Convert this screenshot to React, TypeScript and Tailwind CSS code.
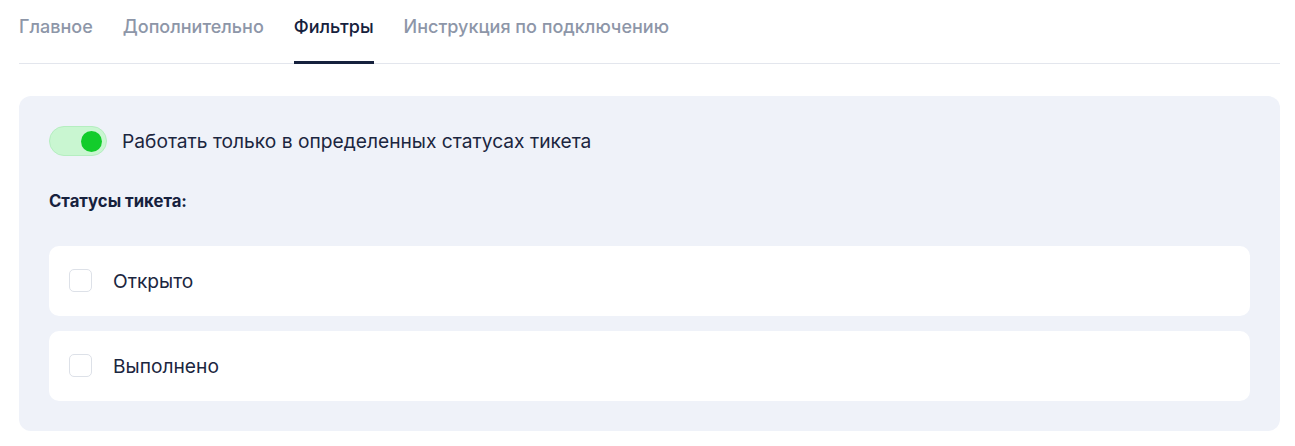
import React, { useState } from 'react';

const tabs = ['Главное', 'Дополнительно', 'Фильтры', 'Инструкция по подключению'];

const statuses = [
  { id: 'open', label: 'Открыто' },
  { id: 'done', label: 'Выполнено' },
];

const App: React.FC = () => {
  const [activeTab, setActiveTab] = useState(2);
  const [enabled, setEnabled] = useState(true);
  const [checked, setChecked] = useState<Record<string, boolean>>({});

  return (
    <div className="min-h-screen bg-white px-[19px] pr-[15px] font-['Inter',sans-serif]">
      {/* Tabs */}
      <div className="flex gap-[30px] border-b border-[#e3e6ed]">
        {tabs.map((tab, i) => (
          <button
            key={tab}
            onClick={() => setActiveTab(i)}
            className={`relative h-[63px] pb-[10px] text-[18px] font-medium leading-none ${
              activeTab === i ? 'text-[#16213d]' : 'text-[#8d96a8]'
            }`}
          >
            {tab}
            {activeTab === i && (
              <span className="absolute bottom-[-1px] left-0 right-0 h-[3px] bg-[#16213d]" />
            )}
          </button>
        ))}
      </div>

      {/* Filters panel */}
      <div className="mt-[32px] rounded-[12px] bg-[#eff2f9] p-[30px]">
        <div className="flex items-center gap-[15px]">
          <button
            onClick={() => setEnabled(!enabled)}
            className={`flex h-[30px] w-[58px] items-center rounded-full border px-[4px] ${
              enabled ? 'justify-end border-[#b5eec0] bg-[#c9f6d1]' : 'justify-start border-[#d5dae4] bg-[#e3e7ee]'
            }`}
          >
            <span className={`h-[21px] w-[21px] rounded-full ${enabled ? 'bg-[#12cc2b]' : 'bg-white'}`} />
          </button>
          <span className="text-[19.2px] text-[#1b2640]">Работать только в определенных статусах тикета</span>
        </div>

        <div className="mt-[35px] text-[16.7px] font-bold leading-[20px] text-[#16213d]">Статусы тикета:</div>

        <div className="mt-[35px] flex flex-col gap-[15px]">
          {statuses.map((s) => (
            <label
              key={s.id}
              className="flex h-[70px] cursor-pointer items-center gap-[21px] rounded-[10px] bg-white px-[20px]"
            >
              <input
                type="checkbox"
                className="peer hidden"
                checked={!!checked[s.id]}
                onChange={() => setChecked({ ...checked, [s.id]: !checked[s.id] })}
              />
              <span className="mb-[2px] h-[23px] w-[23px] rounded-[5px] border border-[#dde1e8] bg-white" />
              <span className="text-[19.2px] text-[#1b2640]">{s.label}</span>
            </label>
          ))}
        </div>
      </div>
    </div>
  );
};

export default App;
